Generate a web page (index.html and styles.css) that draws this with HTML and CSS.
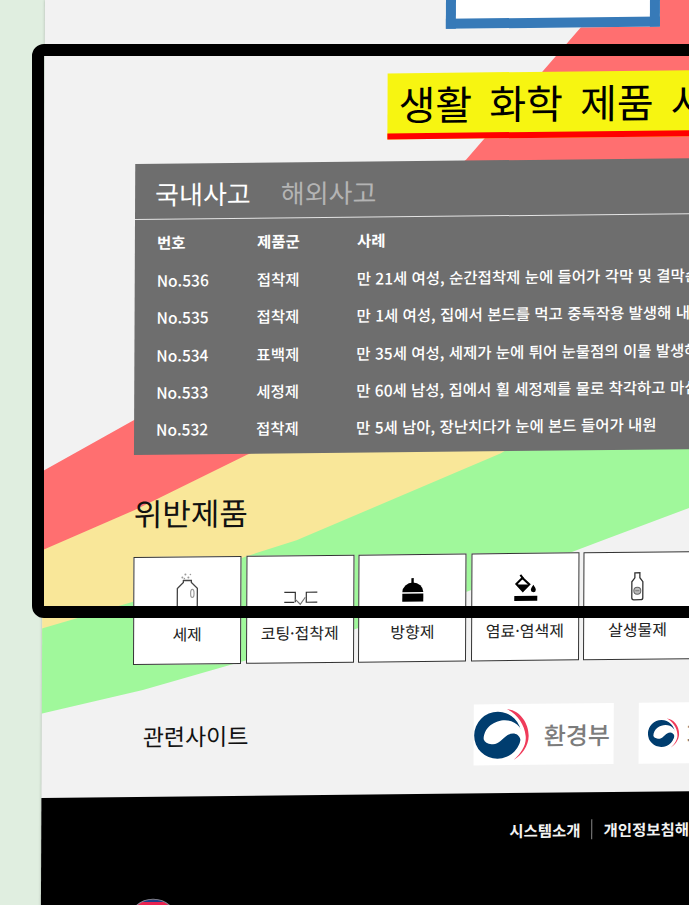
FILE: index.html
```html
<!DOCTYPE html>
<html lang="ko">
<head>
  <meta charset="UTF-8" />
  <meta name="viewport" content="width=device-width, initial-scale=1" />
  <title>생활 화학 제품 사고</title>
  <link rel="stylesheet" href="styles.css">
</head>
<body>

  <div class="page">
    <svg class="bands" aria-hidden="true">
      <polygon fill="#ff6f70" points="571,-8 535,34 422,164 91,421 -2,472 -2,580 204,500 780,240 780,-8" />
      <polygon fill="#f9e799" points="-2,551 92,511 204,457 780,230 780,330 254,560 -2,640" />
      <polygon fill="#a0f89b" points="-2,629 90,603 202,559 254,543 458,458 717,307 780,270 780,465 717,489 561,546 425,596 311,633 101,691 -2,714" />
    </svg>

    <div class="content">
      <div class="top-box"></div>

      <h1 class="title">생활 화학 제품 사고 사례</h1>

      <section class="accident">
        <div class="tabs">
          <span class="tab on">국내사고</span>
          <span class="tab">해외사고</span>
        </div>
        <table>
          <thead>
            <tr><th>번호</th><th>제품군</th><th>사례</th></tr>
          </thead>
          <tbody>
            <tr><td>No.536</td><td>접착제</td><td>만 21세 여성, 순간접착제 눈에 들어가 각막 및 결막손상</td></tr>
            <tr><td>No.535</td><td>접착제</td><td>만 1세 여성, 집에서 본드를 먹고 중독작용 발생해 내원</td></tr>
            <tr><td>No.534</td><td>표백제</td><td>만 35세 여성, 세제가 눈에 튀어 눈물점의 이물 발생해 내원</td></tr>
            <tr><td>No.533</td><td>세정제</td><td>만 60세 남성, 집에서 휠 세정제를 물로 착각하고 마심</td></tr>
            <tr><td>No.532</td><td>접착제</td><td>만 5세 남아, 장난치다가 눈에 본드 들어가 내원</td></tr>
          </tbody>
        </table>
      </section>

      <h2 class="sub">위반제품</h2>

      <div class="items">
        <a class="item">
          <svg viewBox="0 0 44 48">
            <g fill="#999"><circle cx="17" cy="6" r="1" /><circle cx="20" cy="3" r="1" /><circle cx="23" cy="6" r="1" /><circle cx="25" cy="3" r=".8" /><circle cx="19" cy="7" r=".8" /></g>
            <path d="M18 9h8v2l6 6v24q0 2-2 2H14q-2 0-2-2V17l6-6z" fill="none" stroke="#444" stroke-width="1.3" />
            <ellipse cx="27" cy="22" rx="1.7" ry="4" fill="none" stroke="#999" stroke-width="1.2" />
          </svg>
          <span>세제</span>
        </a>
        <a class="item">
          <svg viewBox="0 0 44 48">
            <path d="M6 22h11v10M6 32h10M39 22H28v10h11" fill="none" stroke="#333" stroke-width="1.2" />
            <path d="M17 29l5 5 5-7" fill="none" stroke="#777" stroke-width="1.2" />
          </svg>
          <span>코팅·접착제</span>
        </a>
        <a class="item">
          <svg viewBox="0 0 44 48">
            <rect x="21" y="9" width="2.4" height="6" />
            <path d="M12 23a10.500 9.500 0 0 1 21 0z" />
            <rect x="12" y="24.500" width="21" height="8" />
          </svg>
          <span>방향제</span>
        </a>
        <a class="item">
          <svg viewBox="0 0 44 48">
            <path d="M17 7l3 4" fill="none" stroke="#000" stroke-width="2" />
            <path d="M13 16l6-6 7 6.500-6.500 6.500z" fill="none" stroke="#000" stroke-width="2" />
            <path d="M13 16.500h13l-6.500 6.500z" />
            <path d="M30 17q-2.500 3.500-2.500 5a2.500 2.500 0 0 0 5 0q0-1.500-2.500-5z" />
            <rect x="11" y="28" width="23" height="5" />
          </svg>
          <span>염료·염색제</span>
        </a>
        <a class="item">
          <svg viewBox="0 0 44 48">
            <path d="M19.500 6h5v5l3 4v16q0 2-2 2h-7q-2 0-2-2V15l3-4z" fill="none" stroke="#333" stroke-width="1.300" />
            <circle cx="22" cy="24" r="3.500" fill="#bbb" stroke="#666" />
            <path d="M20 24h4" stroke="#666" stroke-width=".8" />
          </svg>
          <span>살생물제</span>
        </a>
      </div>

      <div class="related">
        <h3>관련사이트</h3>
        <a class="site">
          <svg class="mark" viewBox="-28 -28 56 56">
            <circle cx="-4" cy="0" r="23.500" fill="#003d6f" />
            <path d="M-18 4C-18-9-6-15 3-15 14-15 22-6 22 3L22 22 10 24C16 15 19 9 19 5 17-2 11-3 6 0 0 4-3 10-10 9-14 9-17 7-18 4z" fill="#fff" />
            <path d="M5-26C18-25 27-12 27 1 27 11 20 20 12 25 20 18 25 10 24 1 23-10 15-22 5-26z" fill="#ef3b5a" />
          </svg>
          <span>환경부</span>
        </a>
        <a class="site small">
          <svg class="mark" viewBox="-28 -28 56 56">
            <circle cx="-4" cy="0" r="23.500" fill="#003d6f" />
            <path d="M-18 4C-18-9-6-15 3-15 14-15 22-6 22 3L22 22 10 24C16 15 19 9 19 5 17-2 11-3 6 0 0 4-3 10-10 9-14 9-17 7-18 4z" fill="#fff" />
            <path d="M5-26C18-25 27-12 27 1 27 11 20 20 12 25 20 18 25 10 24 1 23-10 15-22 5-26z" fill="#ef3b5a" />
          </svg>
          <span>화학물질안전원</span>
        </a>
      </div>
    </div>

    <footer class="foot">
      <div class="foot-links">
        <a>시스템소개</a>
        <a>개인정보침해신고</a>
      </div>
      <div class="foot-logo"></div>
    </footer>
  </div>

  <div class="frame"></div>

</body>
</html>
```

FILE: styles.css
```css
* {
  margin: 0; padding: 0; box-sizing: border-box;
  font-family: "Noto Sans CJK KR", "Noto Sans", sans-serif;
}

html, body {
  height: 100%;
  overflow: hidden;
}

body {
  background: #e0eee0;
  position: relative;
}

/* whole page is photographed a little tilted */
.page {
  position: relative;
  width: 780px;
  margin-left: 45px;
  background: #f2f2f2;
  box-shadow: 0 0 3px rgba(0, 0, 0, 0.25);
  transform-origin: 0 0;
  transform: matrix(1, -0.0105, -0.0045, 1, 0, 0);
}

.bands {
  position: absolute;
  top: 0;
  left: 0;
  width: 100%;
  height: 800px;
  overflow: hidden;
}

.content {
  position: relative;
  height: 798px;
  padding-left: 91px;
}

.top-box {
  width: 214px;
  height: 33px;
  margin-left: 310px;
  background: #fff;
  border: 10px solid #377ab8;
  border-top: 0;
}

.title {
  width: 440px;
  height: 66px;
  margin: 44px 0 22px 252px;
  padding-left: 11px;
  background: #f7f511;
  border-bottom: 6px solid #f00;
  color: #000;
  font-size: 40px;
  font-weight: 400;
  line-height: 60px;
  word-spacing: 6px;
  white-space: nowrap;
}

.accident {
  width: 689px;
  height: 291px;
  background: #6e6e6e;
  color: #fff;
}

.tabs {
  display: flex;
  gap: 30px;
  height: 56px;
  padding: 4px 0 0 20px;
  align-items: center;
  border-bottom: 1px solid #e4e4e4;
}

.tab {
  font-size: 26px;
  line-height: 34px;
  color: #b4b4b4;
}

.tab.on {
  color: #fff;
}

table {
  border-collapse: collapse;
  margin-top: 2px;
  margin-left: 22px;
}

th, td {
  width: 100px;
  height: 37.300px;
  font-size: 15.500px;
  text-align: left;
  white-space: nowrap;
}

th {
  height: 39.300px;
  font-weight: 700;
}

td {
  font-weight: 500;
}

.sub {
  margin-top: 37px;
  font-size: 31px;
  font-weight: 400;
  line-height: 42px;
  color: #111;
}

.items {
  display: flex;
  gap: 4.600px;
  margin-top: 23px;
}

.item {
  width: 108px;
  height: 108px;
  flex: none;
  padding-top: 14px;
  background: #fff;
  border: 1px solid #333;
  text-align: center;
}

.item svg {
  display: block;
  width: 44px;
  height: 48px;
  margin: 0 auto;
}

.item span {
  display: block;
  margin-top: 4px;
  font-size: 16px;
  line-height: 20px;
  color: #222;
}

.related {
  display: flex;
  align-items: center;
  gap: 25px;
  margin-top: 43px;
  padding-left: 10px;
}

.related h3 {
  width: 306px;
  margin-bottom: 6px;
  font-size: 23px;
  font-weight: 400;
  color: #111;
}

.site {
  width: 140px;
  height: 61px;
  flex: none;
  display: flex;
  align-items: center;
  gap: 14px;
  background: #fff;
  white-space: nowrap;
  overflow: hidden;
}

.site .mark {
  width: 56px;
  height: 56px;
  flex: none;
}

.site span {
  font-size: 24px;
  font-weight: 500;
  color: #7c7c7c;
}

.site.small {
  gap: 7px;
  padding-left: 9px;
}

.site.small .mark {
  width: 32px;
  height: 32px;
}

.foot {
  position: relative;
  height: 220px;
  background: #000;
  padding: 27px 0 0 468px;
}

.foot-links {
  display: flex;
  white-space: nowrap;
}

.foot-links a {
  font-size: 15.500px;
  font-weight: 700;
  line-height: 20px;
  color: #f2f2f2;
}

.foot-links a + a {
  margin-left: 11px;
  padding-left: 11px;
  border-left: 1px solid #888;
}

.foot-logo {
  width: 52px;
  height: 52px;
  margin: 55px 0 0 -382px;
  border-radius: 50%;
  border: 1px solid #8a8a9a;
  background: linear-gradient(#1f3f8a 0, #1f3f8a 4%, #e8224f 5%, #e8224f 50%, #1f3f8a 51%);
}

.frame {
  position: absolute;
  top: 44px;
  left: 32px;
  width: 720px;
  height: 574px;
  border: 12px solid #000;
  border-radius: 12px;
  pointer-events: none;
}
```
